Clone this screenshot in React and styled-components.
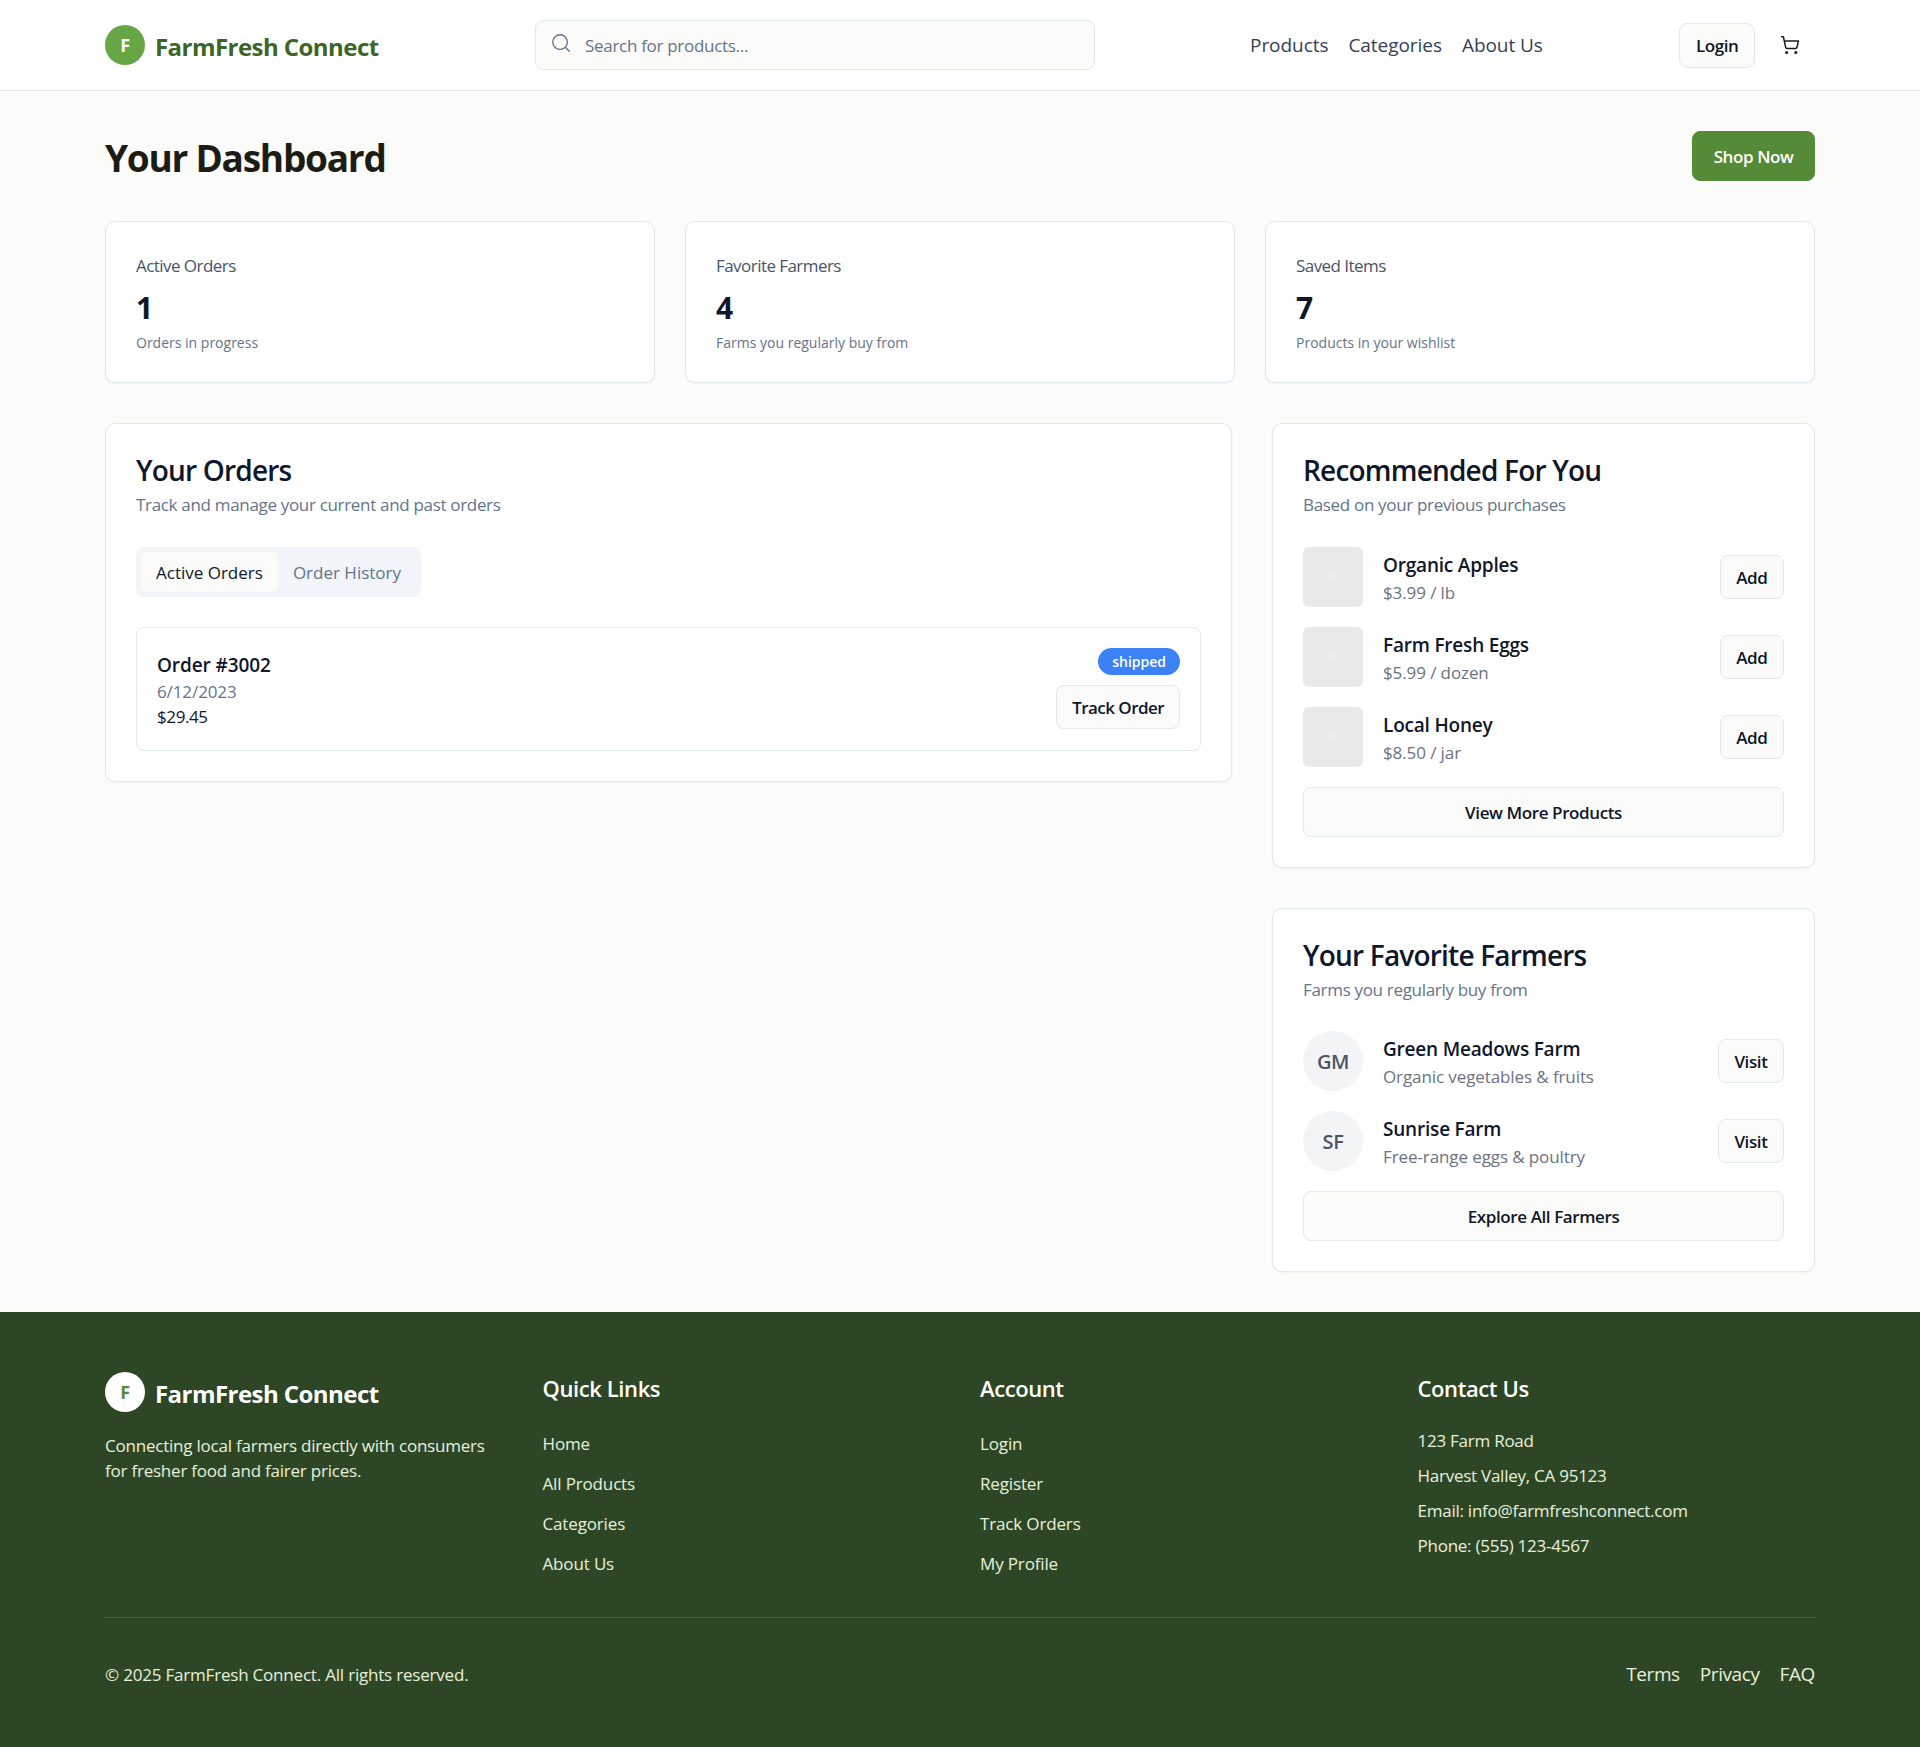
import React from "react";
import styled, { createGlobalStyle } from "styled-components";
import { Search, ShoppingCart } from "lucide-react";

const GlobalStyle = createGlobalStyle`
  * { box-sizing: border-box; }
  html, body { margin: 0; padding: 0; }
  body {
    background: #fbfbf9;
    color: #1c1c14;
    font-family: "Open Sans", "Noto Sans", sans-serif;
    letter-spacing: -0.4px;
  }
  h1, h2, h3, h4, p, ul { margin: 0; padding: 0; }
  ul { list-style: none; }
`;

const Header = styled.header`
  height: 91px;
  background: #fff;
  border-bottom: 1px solid #e5e7eb;
  padding: 0 105px;
  display: flex;
  align-items: center;
`;

const LogoWrap = styled.div`
  display: flex;
  align-items: center;
  gap: 10px;
`;

const HeaderLogo = styled(LogoWrap)`
  width: 430px;
`;

const LogoMark = styled.div`
  width: 40px;
  height: 40px;
  border-radius: 50%;
  background: ${(p) => (p.$light ? "#fff" : "#68a544")};
  color: ${(p) => (p.$light ? "#558b36" : "#fff")};
  font-weight: 700;
  font-size: 18px;
  display: flex;
  align-items: center;
  justify-content: center;
`;

const LogoText = styled.span`
  font-size: 24px;
  font-weight: 700;
  letter-spacing: -0.55px;
  padding-top: 2px;
  color: ${(p) => (p.$light ? "#fff" : "#3d6526")};
`;

const SearchBox = styled.div`
  width: 560px;
  height: 50px;
  background: #fbfbf9;
  border: 1px solid #e2e8f0;
  border-radius: 8px;
  display: flex;
  align-items: center;
  gap: 13px;
  padding: 0 14px;
  color: #64748b;
  font-size: 17px;
  letter-spacing: -0.3px;
  svg { margin-top: -4px; }
`;

const Nav = styled.nav`
  margin-left: 155px;
  display: flex;
  gap: 20px;
  font-size: 19px;
  letter-spacing: -0.05px;
  color: #334155;
`;

const HeaderActions = styled.div`
  margin-left: auto;
  display: flex;
  align-items: center;
  gap: 25px;
  padding-right: 15px;
  svg { color: #1c1c14; }
`;

const Button = styled.button`
  font-family: inherit;
  font-size: 17px;
  font-weight: 600;
  letter-spacing: -0.4px;
  color: #0f172a;
  background: #fbfbf9;
  border: 1px solid #e2e8f0;
  border-radius: 8px;
  height: ${(p) => (p.$tall ? "50px" : "44px")};
  padding: 0 15.5px;
  width: ${(p) => (p.$full ? "100%" : "auto")};
`;

const LoginButton = styled(Button)`
  height: 45px;
`;

const TrackButton = styled(Button)`
  padding: 0 15px;
  letter-spacing: -0.55px;
`;

const PrimaryButton = styled(Button)`
  background: #558b36;
  border-color: #558b36;
  color: #fff;
  height: 50px;
  padding: 0 20.5px;
`;

const Main = styled.main`
  padding: 40px 105px 40px;
`;

const TitleRow = styled.div`
  display: flex;
  justify-content: space-between;
  align-items: center;
  height: 50px;
`;

const PageTitle = styled.h1`
  font-size: 37px;
  font-weight: 700;
  letter-spacing: -1.25px;
  padding-top: 2px;
`;

const StatGrid = styled.div`
  display: grid;
  grid-template-columns: repeat(3, 1fr);
  gap: 30px;
  margin-top: 40px;
`;

const Card = styled.section`
  background: #fff;
  border: 1px solid #e2e8f0;
  border-radius: 10px;
  padding: 30px;
  box-shadow: 0 1px 2px rgba(0, 0, 0, 0.04);
`;

const StatCard = styled(Card)`
  height: 162px;
`;

const StatLabel = styled.h3`
  font-size: 17px;
  font-weight: 500;
  line-height: 28px;
  color: #475569;
  letter-spacing: -0.55px;
`;

const StatValue = styled.div`
  font-size: 30px;
  font-weight: 700;
  line-height: 40px;
  margin-top: 8px;
  color: #0f172a;
`;

const StatNote = styled.p`
  font-size: 14px;
  line-height: 20px;
  margin-top: 5px;
  letter-spacing: 0;
  color: #64748b;
`;

const Columns = styled.div`
  display: grid;
  grid-template-columns: 1127px 543px;
  gap: 40px;
  margin-top: 40px;
  align-items: start;
`;

const SideColumn = styled.div`
  display: flex;
  flex-direction: column;
  gap: 40px;
`;

const CardTitle = styled.h2`
  font-size: 28px;
  font-weight: 600;
  line-height: 33px;
  letter-spacing: -0.8px;
  color: #0f172a;
`;

const CardSubtitle = styled.p`
  font-size: 17px;
  line-height: 26px;
  margin-top: 5px;
  letter-spacing: -0.32px;
  color: #64748b;
`;

const Tabs = styled.div`
  display: inline-flex;
  margin-top: 29px;
  padding: 5px;
  background: #f1f5f9;
  border-radius: 8px;
`;

const Tab = styled.div`
  height: 40px;
  padding: 0 15px;
  display: flex;
  align-items: center;
  font-size: 17px;
  font-weight: 500;
  letter-spacing: 0;
  border-radius: 5px;
  background: ${(p) => (p.$active ? "#fbfbf9" : "transparent")};
  color: ${(p) => (p.$active ? "#0f172a" : "#64748b")};
`;

const OrderBox = styled.div`
  margin-top: 30px;
  height: 124px;
  border: 1px solid #e2e8f0;
  border-radius: 8px;
  padding: 20px;
  display: flex;
  justify-content: space-between;
`;

const OrderName = styled.div`
  font-size: 19px;
  font-weight: 600;
  line-height: 28px;
  letter-spacing: -0.1px;
  color: #0f172a;
  margin-top: 3px;
`;

const OrderDate = styled.div`
  font-size: 17px;
  line-height: 25px;
  letter-spacing: -0.1px;
  color: #64748b;
`;

const OrderPrice = styled.div`
  font-size: 17px;
  line-height: 25px;
  color: #0f172a;
`;

const OrderActions = styled.div`
  display: flex;
  flex-direction: column;
  align-items: flex-end;
  gap: 10px;
`;

const Badge = styled.span`
  height: 27px;
  padding: 0 14px;
  display: flex;
  align-items: center;
  border-radius: 14px;
  background: #3b82f6;
  color: #fff;
  font-size: 14px;
  font-weight: 600;
  letter-spacing: 0;
`;

const ItemList = styled.div`
  margin-top: ${(p) => (p.$tight ? "28px" : "29px")};
  display: flex;
  flex-direction: column;
  gap: 20px;
`;

const Item = styled.div`
  display: flex;
  align-items: center;
  gap: 20px;
`;

const Thumb = styled.div`
  width: 60px;
  height: 60px;
  border-radius: 6px;
  background: #e9e9e9;
  display: flex;
  align-items: center;
  justify-content: center;
  flex: none;
`;

const Avatar = styled.div`
  width: 60px;
  height: 60px;
  border-radius: 50%;
  background: #f3f4f6;
  color: #4b5563;
  font-size: 20px;
  font-weight: 600;
  display: flex;
  align-items: center;
  justify-content: center;
  flex: none;
`;

const ItemText = styled.div`
  flex: 1;
  padding-top: 3px;
`;

const ItemName = styled.div`
  font-size: 19px;
  font-weight: 600;
  line-height: 28px;
  letter-spacing: -0.2px;
  color: #0f172a;
`;

const ItemMeta = styled.div`
  font-size: 17px;
  line-height: 26px;
  margin-top: 1px;
  letter-spacing: -0.1px;
  color: #6b7280;
`;

const FullAction = styled.div`
  margin-top: 20px;
`;

const Footer = styled.footer`
  background: #2d4726;
  color: #e8f0dc;
  padding: 60px 105px 0;
  height: 435px;
`;

const FooterGrid = styled.div`
  display: grid;
  grid-template-columns: repeat(4, minmax(0, 1fr));
  gap: 40px;
  height: 246px;
  border-bottom: 1px solid #41652e;
`;

const FooterText = styled.p`
  margin-top: 21px;
  font-size: 17px;
  line-height: 25px;
  letter-spacing: -0.22px;
`;

const FooterHeading = styled.h4`
  font-size: 22px;
  font-weight: 600;
  line-height: 33px;
  color: #fff;
  margin-bottom: 26px;
`;

const FooterLinks = styled.ul`
  display: flex;
  flex-direction: column;
  gap: 15px;
  font-size: 17px;
  line-height: 25px;
  letter-spacing: -0.15px;
`;

const ContactLines = styled(FooterLinks)`
  gap: 10px;
  margin-top: -3px;
  letter-spacing: -0.25px;
`;

const FooterBottom = styled.div`
  display: flex;
  justify-content: space-between;
  align-items: center;
  height: 112px;
  font-size: 17px;
  letter-spacing: -0.2px;
`;

const LegalLinks = styled.div`
  display: flex;
  gap: 20px;
  font-size: 19px;
  letter-spacing: -0.4px;
`;

const products = [
  { name: "Organic Apples", price: "$3.99 / lb" },
  { name: "Farm Fresh Eggs", price: "$5.99 / dozen" },
  { name: "Local Honey", price: "$8.50 / jar" },
];

const farmers = [
  { initials: "GM", name: "Green Meadows Farm", note: "Organic vegetables & fruits" },
  { initials: "SF", name: "Sunrise Farm", note: "Free-range eggs & poultry" },
];

const stats = [
  { label: "Active Orders", value: "1", note: "Orders in progress" },
  { label: "Favorite Farmers", value: "4", note: "Farms you regularly buy from" },
  { label: "Saved Items", value: "7", note: "Products in your wishlist" },
];

const footerColumns = [
  { title: "Quick Links", links: ["Home", "All Products", "Categories", "About Us"] },
  { title: "Account", links: ["Login", "Register", "Track Orders", "My Profile"] },
];

const PlaceholderIcon = () => (
  <svg width="14" height="14" viewBox="0 0 14 14">
    <circle cx="7" cy="7" r="6" fill="#ececec" />
    <circle cx="7" cy="7" r="2" fill="none" stroke="#f1f1f1" />
  </svg>
);

const App = () => {
  return (
    <>
      <GlobalStyle />
      <Header>
        <HeaderLogo>
          <LogoMark>F</LogoMark>
          <LogoText>FarmFresh Connect</LogoText>
        </HeaderLogo>
        <SearchBox>
          <Search size={22} strokeWidth={1.5} />
          <span>Search for products...</span>
        </SearchBox>
        <Nav>
          <span>Products</span>
          <span>Categories</span>
          <span>About Us</span>
        </Nav>
        <HeaderActions>
          <LoginButton>Login</LoginButton>
          <ShoppingCart size={20} strokeWidth={1.8} />
        </HeaderActions>
      </Header>

      <Main>
        <TitleRow>
          <PageTitle>Your Dashboard</PageTitle>
          <PrimaryButton>Shop Now</PrimaryButton>
        </TitleRow>

        <StatGrid>
          {stats.map((s) => (
            <StatCard key={s.label}>
              <StatLabel>{s.label}</StatLabel>
              <StatValue>{s.value}</StatValue>
              <StatNote>{s.note}</StatNote>
            </StatCard>
          ))}
        </StatGrid>

        <Columns>
          <Card>
            <CardTitle>Your Orders</CardTitle>
            <CardSubtitle>Track and manage your current and past orders</CardSubtitle>
            <Tabs>
              <Tab $active>Active Orders</Tab>
              <Tab>Order History</Tab>
            </Tabs>
            <OrderBox>
              <div>
                <OrderName>Order #3002</OrderName>
                <OrderDate>6/12/2023</OrderDate>
                <OrderPrice>$29.45</OrderPrice>
              </div>
              <OrderActions>
                <Badge>shipped</Badge>
                <TrackButton>Track Order</TrackButton>
              </OrderActions>
            </OrderBox>
          </Card>

          <SideColumn>
            <Card>
              <CardTitle>Recommended For You</CardTitle>
              <CardSubtitle>Based on your previous purchases</CardSubtitle>
              <ItemList>
                {products.map((p) => (
                  <Item key={p.name}>
                    <Thumb><PlaceholderIcon /></Thumb>
                    <ItemText>
                      <ItemName>{p.name}</ItemName>
                      <ItemMeta>{p.price}</ItemMeta>
                    </ItemText>
                    <Button>Add</Button>
                  </Item>
                ))}
              </ItemList>
              <FullAction>
                <Button $full $tall>View More Products</Button>
              </FullAction>
            </Card>

            <Card>
              <CardTitle>Your Favorite Farmers</CardTitle>
              <CardSubtitle>Farms you regularly buy from</CardSubtitle>
              <ItemList $tight>
                {farmers.map((f) => (
                  <Item key={f.name}>
                    <Avatar>{f.initials}</Avatar>
                    <ItemText>
                      <ItemName>{f.name}</ItemName>
                      <ItemMeta>{f.note}</ItemMeta>
                    </ItemText>
                    <Button>Visit</Button>
                  </Item>
                ))}
              </ItemList>
              <FullAction>
                <Button $full $tall>Explore All Farmers</Button>
              </FullAction>
            </Card>
          </SideColumn>
        </Columns>
      </Main>

      <Footer>
        <FooterGrid>
          <div>
            <LogoWrap>
              <LogoMark $light>F</LogoMark>
              <LogoText $light>FarmFresh Connect</LogoText>
            </LogoWrap>
            <FooterText>
              Connecting local farmers directly with consumers for fresher food and fairer prices.
            </FooterText>
          </div>
          {footerColumns.map((c) => (
            <div key={c.title}>
              <FooterHeading>{c.title}</FooterHeading>
              <FooterLinks>
                {c.links.map((l) => (
                  <li key={l}>{l}</li>
                ))}
              </FooterLinks>
            </div>
          ))}
          <div>
            <FooterHeading>Contact Us</FooterHeading>
            <ContactLines>
              <li>123 Farm Road</li>
              <li>Harvest Valley, CA 95123</li>
              <li>Email: info@farmfreshconnect.com</li>
              <li>Phone: (555) 123-4567</li>
            </ContactLines>
          </div>
        </FooterGrid>
        <FooterBottom>
          <span>© 2025 FarmFresh Connect. All rights reserved.</span>
          <LegalLinks>
            <span>Terms</span>
            <span>Privacy</span>
            <span>FAQ</span>
          </LegalLinks>
        </FooterBottom>
      </Footer>
    </>
  );
};

export default App;
